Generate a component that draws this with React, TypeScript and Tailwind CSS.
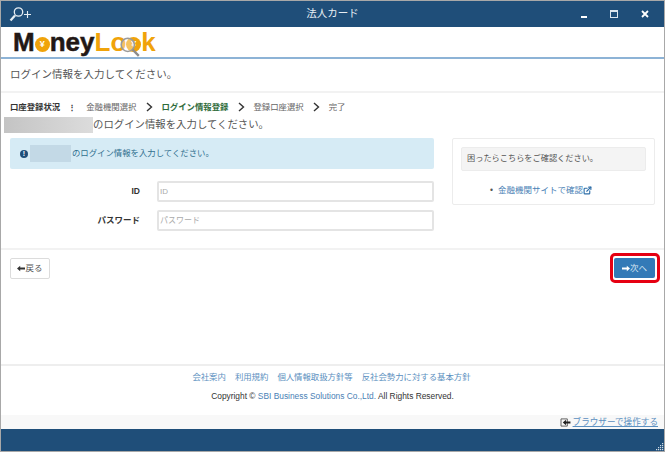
import { ExternalLink } from 'lucide-react';

const font = { fontFamily: '"Liberation Sans", "Noto Sans CJK JP", sans-serif' };

const ArrowIcon = ({ dir, className }: { dir: 'left' | 'right'; className?: string }) => (
  <svg viewBox="0 0 10 8" className={className} fill="currentColor">
    {dir === 'left' ? <path d="M0 4 4 0.5V2.6H10V5.4H4V7.5Z" /> : <path d="M10 4 6 0.5V2.6H0V5.4H6V7.5Z" />}
  </svg>
);

const Chevron = () => (
  <svg viewBox="0 0 7 10" className="w-[7px] h-[10px] text-[#333]" fill="none" stroke="currentColor" strokeWidth="1.4">
    <path d="M1 1 5.5 5 1 9" />
  </svg>
);

const Coin = () => (
  <span className="inline-flex items-center justify-center w-[15px] h-[15px] rounded-full bg-[#f0a30a] text-white text-[9px] font-bold leading-none">
    ¥
  </span>
);

const Logo = () => (
  <div className="relative flex items-end h-[25px] text-[26px] leading-[25px] font-bold" style={{ fontFamily: '"Liberation Sans", sans-serif' }}>
    <span className="text-[#231815] [-webkit-text-stroke:0.5px_#231815]">M</span>
    <span className="mb-[3px]"><Coin /></span>
    <span className="text-[#231815] [-webkit-text-stroke:0.5px_#231815]">ney</span>
    <span className="text-[#f0a30a]">L</span>
    <span className="text-[#f0a30a]">o</span>
    <span className="mb-[3px]"><Coin /></span>
    <span className="text-[#f0a30a]">k</span>
    <svg viewBox="0 0 20 20" className="absolute left-[106px] top-[6px] w-[22px] h-[22px]" fill="none">
      <circle cx="8" cy="8" r="6" stroke="#9a9a9a" strokeWidth="1.4" fill="#ffffff" fillOpacity="0.35" />
      <path d="M12.5 12.5 18 18" stroke="#8c8c8c" strokeWidth="2.2" />
    </svg>
  </div>
);

export default function App() {
  return (
    <div className="w-[665px] h-[452px] flex flex-col bg-white border-t border-x border-[#a8a8a8] text-[9px] text-[#333] overflow-hidden" style={font}>
      {/* Title bar */}
      <div className="h-[26px] shrink-0 bg-[#1f4e79] grid grid-cols-3 items-center text-white px-[15px]">
        <svg viewBox="0 0 24 16" className="w-[24px] h-[16px] -ml-[7px]" fill="none" stroke="#e6edf3">
          <circle cx="9.5" cy="6" r="4.2" strokeWidth="1.3" />
          <path d="M6 9.5 1.5 14.5" strokeWidth="2.2" />
          <path d="M15 8.5H22M18.5 5V12" strokeWidth="1.1" />
        </svg>
        <span className="text-[10.5px] text-[#e6edf3] text-center">法人カード</span>
        <div className="flex items-center justify-end gap-[23px]">
          <span className="w-[6px] h-[2px] bg-white mt-[6px]" />
          <span className="w-[8px] h-[8px] border border-[#dce6ee] border-t-2" />
          <svg viewBox="0 0 8 8" className="w-[8px] h-[8px]" stroke="white" strokeWidth="1.8">
            <path d="M1 1 7 7M7 1 1 7" />
          </svg>
        </div>
      </div>

      {/* Logo */}
      <div className="h-[32px] shrink-0 pl-[12px] pt-[3px] border-b-2 border-[#8db3d6]">
        <Logo />
      </div>

      {/* Heading */}
      <div className="h-[34px] shrink-0 flex items-center pl-[9px] text-[10.5px] text-[#555] border-b-2 border-[#f2f2f2]">
        ログイン情報を入力してください。
      </div>

      {/* Steps */}
      <div className="flex items-center h-[12px] mt-[8px] pl-[9px] text-[8.4px] text-[#666]">
        <span className="font-bold text-[#333]">口座登録状況</span>
        <span className="ml-[8px] mr-[10px] font-bold text-[#333]">⋮</span>
        <span>金融機関選択</span>
        <span className="mx-[9px]"><Chevron /></span>
        <span className="font-bold text-[#2e6b3a]">ログイン情報登録</span>
        <span className="mx-[9px]"><Chevron /></span>
        <span>登録口座選択</span>
        <span className="mx-[9px]"><Chevron /></span>
        <span>完了</span>
      </div>

      {/* Bank name (masked) */}
      <div className="flex items-center h-[14px] mt-[5px] pl-[3px] text-[10.4px] text-[#555]">
        <span className="w-[89px] h-[16px] bg-gradient-to-r from-[#c4c4c4] to-[#dcdcdc]" />
        <span>のログイン情報を入力してください。</span>
      </div>

      {/* Main */}
      <div className="flex items-start mt-[6px] pl-[9px] pr-[9px] h-[110px]">
        <div className="w-[424px] shrink-0">
          <div className="h-[31px] flex items-center bg-[#d6ebf5] rounded-[2px] pl-[10px] text-[8.4px] text-[#31708f]">
            <span className="w-[8px] h-[8px] rounded-full bg-[#1f4e79] text-white text-[7px] font-bold leading-[8px] text-center">!</span>
            <span className="w-[41px] h-[17px] ml-[2px] bg-[#c3d9e6]" />
            <span className="ml-[1px]">のログイン情報を入力してください。</span>
          </div>
          <div className="flex items-center mt-[12px]">
            <label className="w-[130px] text-right text-[8.5px] font-bold text-[#333]">ID</label>
            <input readOnly placeholder="ID" className="ml-[17px] w-[277px] h-[21px] px-[1px] text-[8px] border-2 border-[#e4e4e4] rounded-[2px] placeholder:text-[#aaa] outline-none" />
          </div>
          <div className="flex items-center mt-[8px]">
            <label className="w-[130px] text-right text-[8.5px] font-bold text-[#333]">パスワード</label>
            <input readOnly placeholder="パスワード" className="ml-[17px] w-[277px] h-[21px] px-[1px] text-[8px] border-2 border-[#e4e4e4] rounded-[2px] placeholder:text-[#aaa] outline-none" />
          </div>
        </div>

        <div className="ml-[18px] w-[203px] h-[67px] border border-[#ececec] rounded-[2px] px-[8px] pt-[8px]">
          <div className="h-[24px] flex items-center bg-[#f4f4f4] border border-[#ececec] rounded-[2px] pl-[5px] text-[8.2px] text-[#555]">
            困ったらこちらをご確認ください。
          </div>
          <div className="flex items-center pl-[29px] mt-[13px] text-[8.5px] text-[#4a7fb5]">
            <span className="text-[#555] mr-[5px]">•</span>
            <span>金融機関サイトで確認</span>
            <ExternalLink className="w-[9px] h-[9px] text-[#2f6fa8]" strokeWidth={3} />
          </div>
        </div>
      </div>

      {/* Buttons */}
      <div className="h-[40px] shrink-0 border-t-2 border-[#f2f2f2] flex items-start justify-between pl-[9px] pr-[4px] pt-[3px]">
        <button className="mt-[5px] w-[40px] h-[21px] flex items-center justify-center border border-[#dcdcdc] rounded-[2px] text-[8.5px] text-[#555]">
          <ArrowIcon dir="left" className="w-[8px] h-[7px] text-[#333]" />
          戻る
        </button>
        <div className="border-[3px] border-[#e60012] rounded-[5px] pl-[1px] pr-[2px] pt-[2px] pb-[2px]">
          <button className="w-[41px] h-[20px] flex items-center justify-center bg-[#337ab7] rounded-[2px] text-[8.5px] text-[#dbe8f3]">
            <ArrowIcon dir="right" className="w-[8px] h-[7px] text-white" />
            次へ
          </button>
        </div>
      </div>

      {/* Footer */}
      <div className="mt-[76px] h-[51px] shrink-0 border-t-2 border-[#eeeeee] flex flex-col items-center">
        <div className="flex gap-[9px] mt-[5px] mr-[2px] text-[8.4px] text-[#5b8fc0]">
          <span>会社案内</span>
          <span>利用規約</span>
          <span>個人情報取扱方針等</span>
          <span>反社会勢力に対する基本方針</span>
        </div>
        <div className="mt-[6px] text-[8.4px] text-[#333]">
          Copyright © <span className="text-[#4a7fb5]">SBI Business Solutions Co.,Ltd.</span> All Rights Reserved.
        </div>
      </div>

      {/* Status strip */}
      <div className="h-[14px] shrink-0 bg-[#f8f8f8] flex items-center justify-end pr-[6px]">
        <svg viewBox="0 0 12 10" className="w-[11px] h-[9px] mr-[2px]" fill="none">
          <path d="M1 1H8V9H1Z" stroke="#555" strokeWidth="1" />
          <path d="M3 5 6.5 2V3.8H11.5V6.2H6.5V8Z" fill="#222" />
        </svg>
        <span className="text-[8.6px] text-[#5b8fc0] underline">ブラウザーで操作する</span>
      </div>

      {/* Bottom bar */}
      <div className="relative flex-1 bg-[#1f4e79] border-b border-[#a8a8a8]">
        <svg viewBox="0 0 8 8" className="absolute right-0 bottom-0 w-[8px] h-[8px]" fill="#cfdbe6">
          <rect x="6" y="0" width="1.2" height="1.2" />
          <rect x="4" y="2" width="1.2" height="1.2" />
          <rect x="6" y="2" width="1.2" height="1.2" />
          <rect x="2" y="4" width="1.2" height="1.2" />
          <rect x="4" y="4" width="1.2" height="1.2" />
          <rect x="6" y="4" width="1.2" height="1.2" />
          <rect x="0" y="6" width="1.2" height="1.2" />
          <rect x="2" y="6" width="1.2" height="1.2" />
          <rect x="4" y="6" width="1.2" height="1.2" />
          <rect x="6" y="6" width="1.2" height="1.2" />
        </svg>
      </div>
    </div>
  );
}
